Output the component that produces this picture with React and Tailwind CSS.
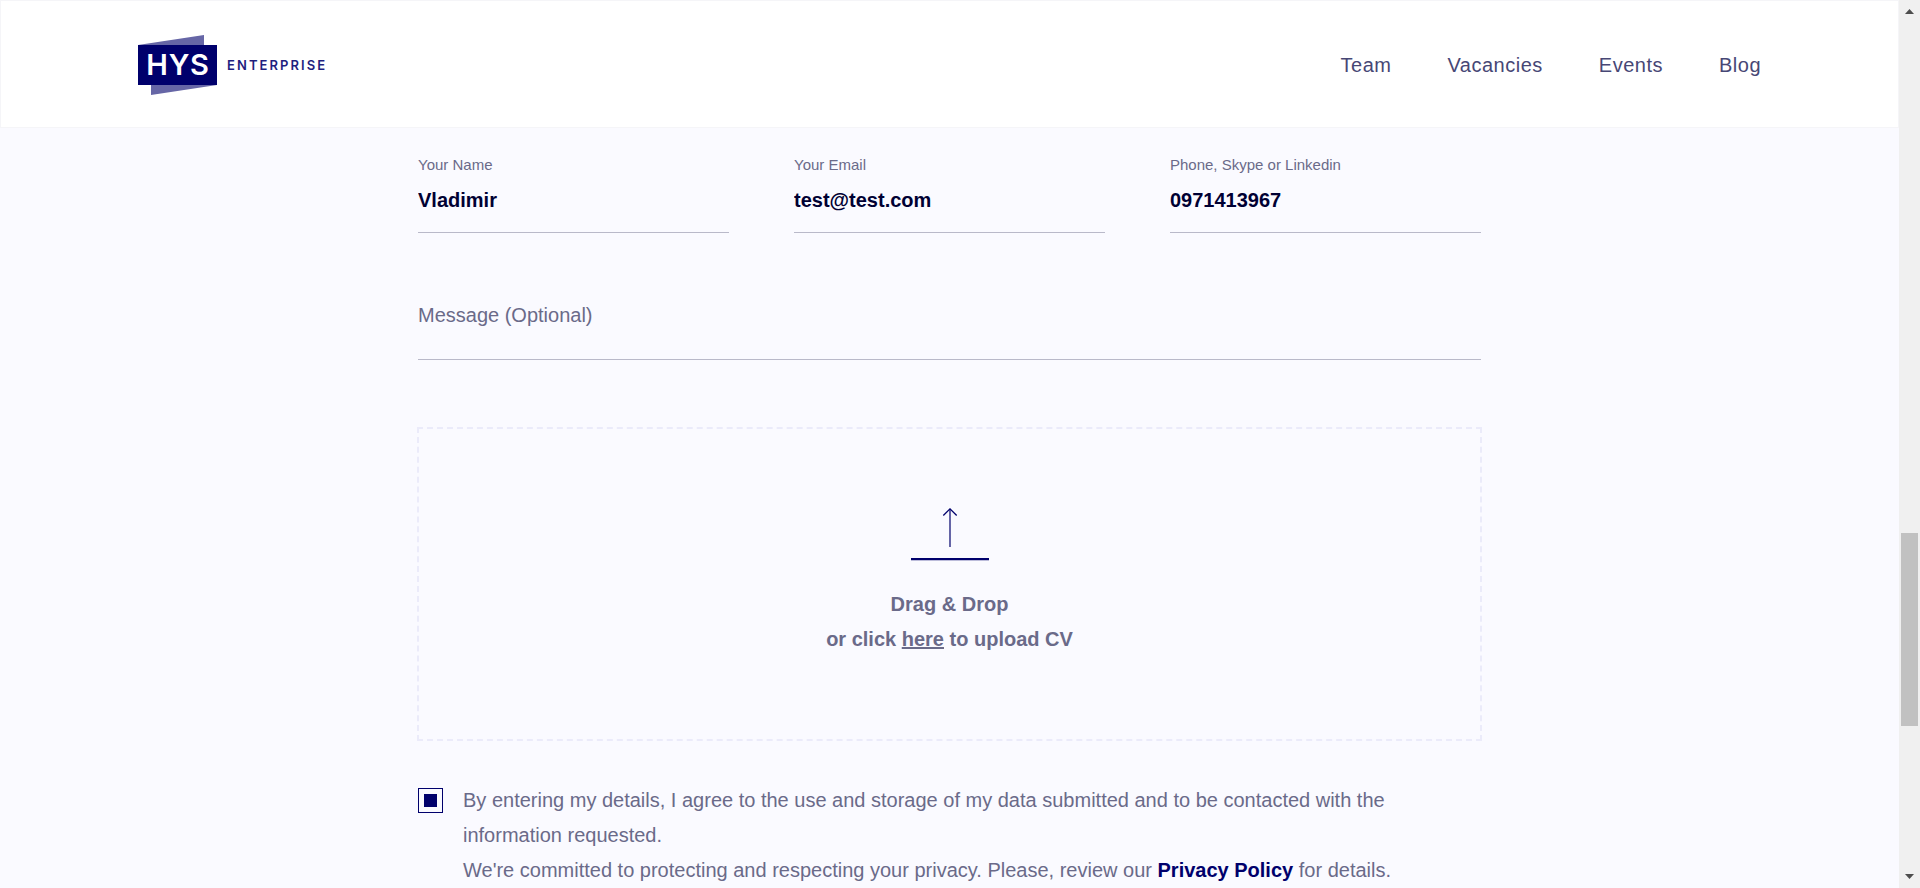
import { useState } from "react";

const NAV_LINKS = ["Team", "Vacancies", "Events", "Blog"];

const CONTACT_FIELDS = [
  { id: "name", label: "Your Name", type: "text", value: "Vladimir" },
  { id: "email", label: "Your Email", type: "email", value: "test@test.com" },
  { id: "contact", label: "Phone, Skype or Linkedin", type: "text", value: "0971413967" },
];

function Logo() {
  return (
    <a href="#" className="flex items-center gap-[10px]">
      <svg width="79" height="60" viewBox="0 0 79 60" role="img" aria-label="HYS">
        <polygon points="0,10 66,0 66,12 0,12" fill="#6666a6" />
        <polygon points="13,48 79,48 79,50 13,60" fill="#6666a6" />
        <rect y="10" width="79" height="40" fill="#00006c" />
        <text
          x="40"
          y="40"
          textAnchor="middle"
          fill="#ffffff"
          className="font-['Inter',sans-serif] text-[29px] font-semibold tracking-wide"
        >
          HYS
        </text>
      </svg>
      <span className="font-['Inter',sans-serif] text-[13px] leading-5 font-semibold tracking-[0.16em] text-[#1f1f80]">
        ENTERPRISE
      </span>
    </a>
  );
}

function Header() {
  return (
    <header className="flex h-32 shrink-0 items-center justify-between border border-[#f5f5f8] bg-white px-[137px] pt-px">
      <Logo />
      <nav className="flex gap-14">
        {NAV_LINKS.map((name) => (
          <a key={name} href="#" className="text-xl tracking-wide text-[#474775]">
            {name}
          </a>
        ))}
      </nav>
    </header>
  );
}

function Field({ id, label, type, value }) {
  return (
    <div className="flex flex-col">
      <label htmlFor={id} className="text-[15px] leading-5">
        {label}
      </label>
      <input
        id={id}
        type={type}
        defaultValue={value}
        className="h-[58px] w-full border-b border-[#b9b9c9] pt-1 pb-[10px] text-xl font-bold text-[#000033] outline-none"
      />
    </div>
  );
}

function UploadBox() {
  return (
    <div className="-mx-px mt-[67px] flex h-[314px] flex-col items-center border-2 border-dashed border-[#ebebfa] pt-[79px]">
      <svg width="79" height="53" viewBox="0 0 79 53" fill="none" stroke="#00006c" aria-hidden="true">
        <path d="M40 1V39" strokeWidth="1.2" />
        <path d="M33.3 7.5L40 0.9L46.7 7.5" strokeWidth="1.3" />
        <path d="M1 51.2H79" strokeWidth="2.2" />
      </svg>
      <p className="mt-[26px] text-center text-xl leading-[35px] font-bold">
        Drag &amp; Drop
        <br />
        or click{" "}
        <label htmlFor="cv" className="cursor-pointer underline">
          here
        </label>{" "}
        to upload CV
      </p>
      <input id="cv" type="file" className="sr-only" />
    </div>
  );
}

function Consent() {
  const [agreed, setAgreed] = useState(true);
  return (
    <div className="mt-[42px] flex items-start gap-5">
      <input
        id="consent"
        type="checkbox"
        checked={agreed}
        onChange={(event) => setAgreed(event.target.checked)}
        className="mt-[5px] size-[25px] shrink-0 appearance-none rounded-none border border-[#00006c] bg-clip-content p-[5px] checked:bg-[#00006c]"
      />
      <label htmlFor="consent" className="max-w-[960px] text-xl leading-[35px]">
        By entering my details, I agree to the use and storage of my data submitted and to be contacted with the
        information requested.
        <br />
        We're committed to protecting and respecting your privacy. Please, review our{" "}
        <a href="#" className="font-bold text-[#00006c]">
          Privacy Policy
        </a>{" "}
        for details.
      </label>
    </div>
  );
}

function ScrollBar() {
  return (
    <div className="flex w-[21px] shrink-0 flex-col items-center bg-[#f0f0f0]" aria-hidden="true">
      <svg width="21" height="21" viewBox="0 0 21 21" fill="#4d4d4d">
        <polygon points="6,14 15,14 10.5,9" />
      </svg>
      <div className="grow-[512] basis-0" />
      <div className="w-[17px] grow-[193] basis-0 bg-[#c1c1c1]" />
      <div className="grow-[141] basis-0" />
      <svg width="21" height="21" viewBox="0 0 21 21" fill="#4d4d4d">
        <polygon points="6,7 15,7 10.5,12" />
      </svg>
    </div>
  );
}

export default function App() {
  return (
    <div className="flex h-screen overflow-hidden bg-[#fafaff] font-['Liberation_Sans',Arial,sans-serif] text-[#6a6a89]">
      <div className="flex min-w-0 flex-1 flex-col">
        <Header />
        <main className="min-h-0 flex-1 overflow-hidden px-8">
          <form className="mx-auto max-w-[1063px] pt-[27px]">
            <div className="grid grid-cols-3 gap-[65px]">
              {CONTACT_FIELDS.map((field) => (
                <Field key={field.id} {...field} />
              ))}
            </div>
            <textarea
              rows={1}
              aria-label="Message (Optional)"
              placeholder="Message (Optional)"
              className="mt-[67px] block h-[60px] w-full resize-none border-b border-[#b9b9c9] text-xl leading-[30px] outline-none placeholder:text-[#6a6a89]"
            />
            <UploadBox />
            <Consent />
          </form>
        </main>
      </div>
      <ScrollBar />
    </div>
  );
}
